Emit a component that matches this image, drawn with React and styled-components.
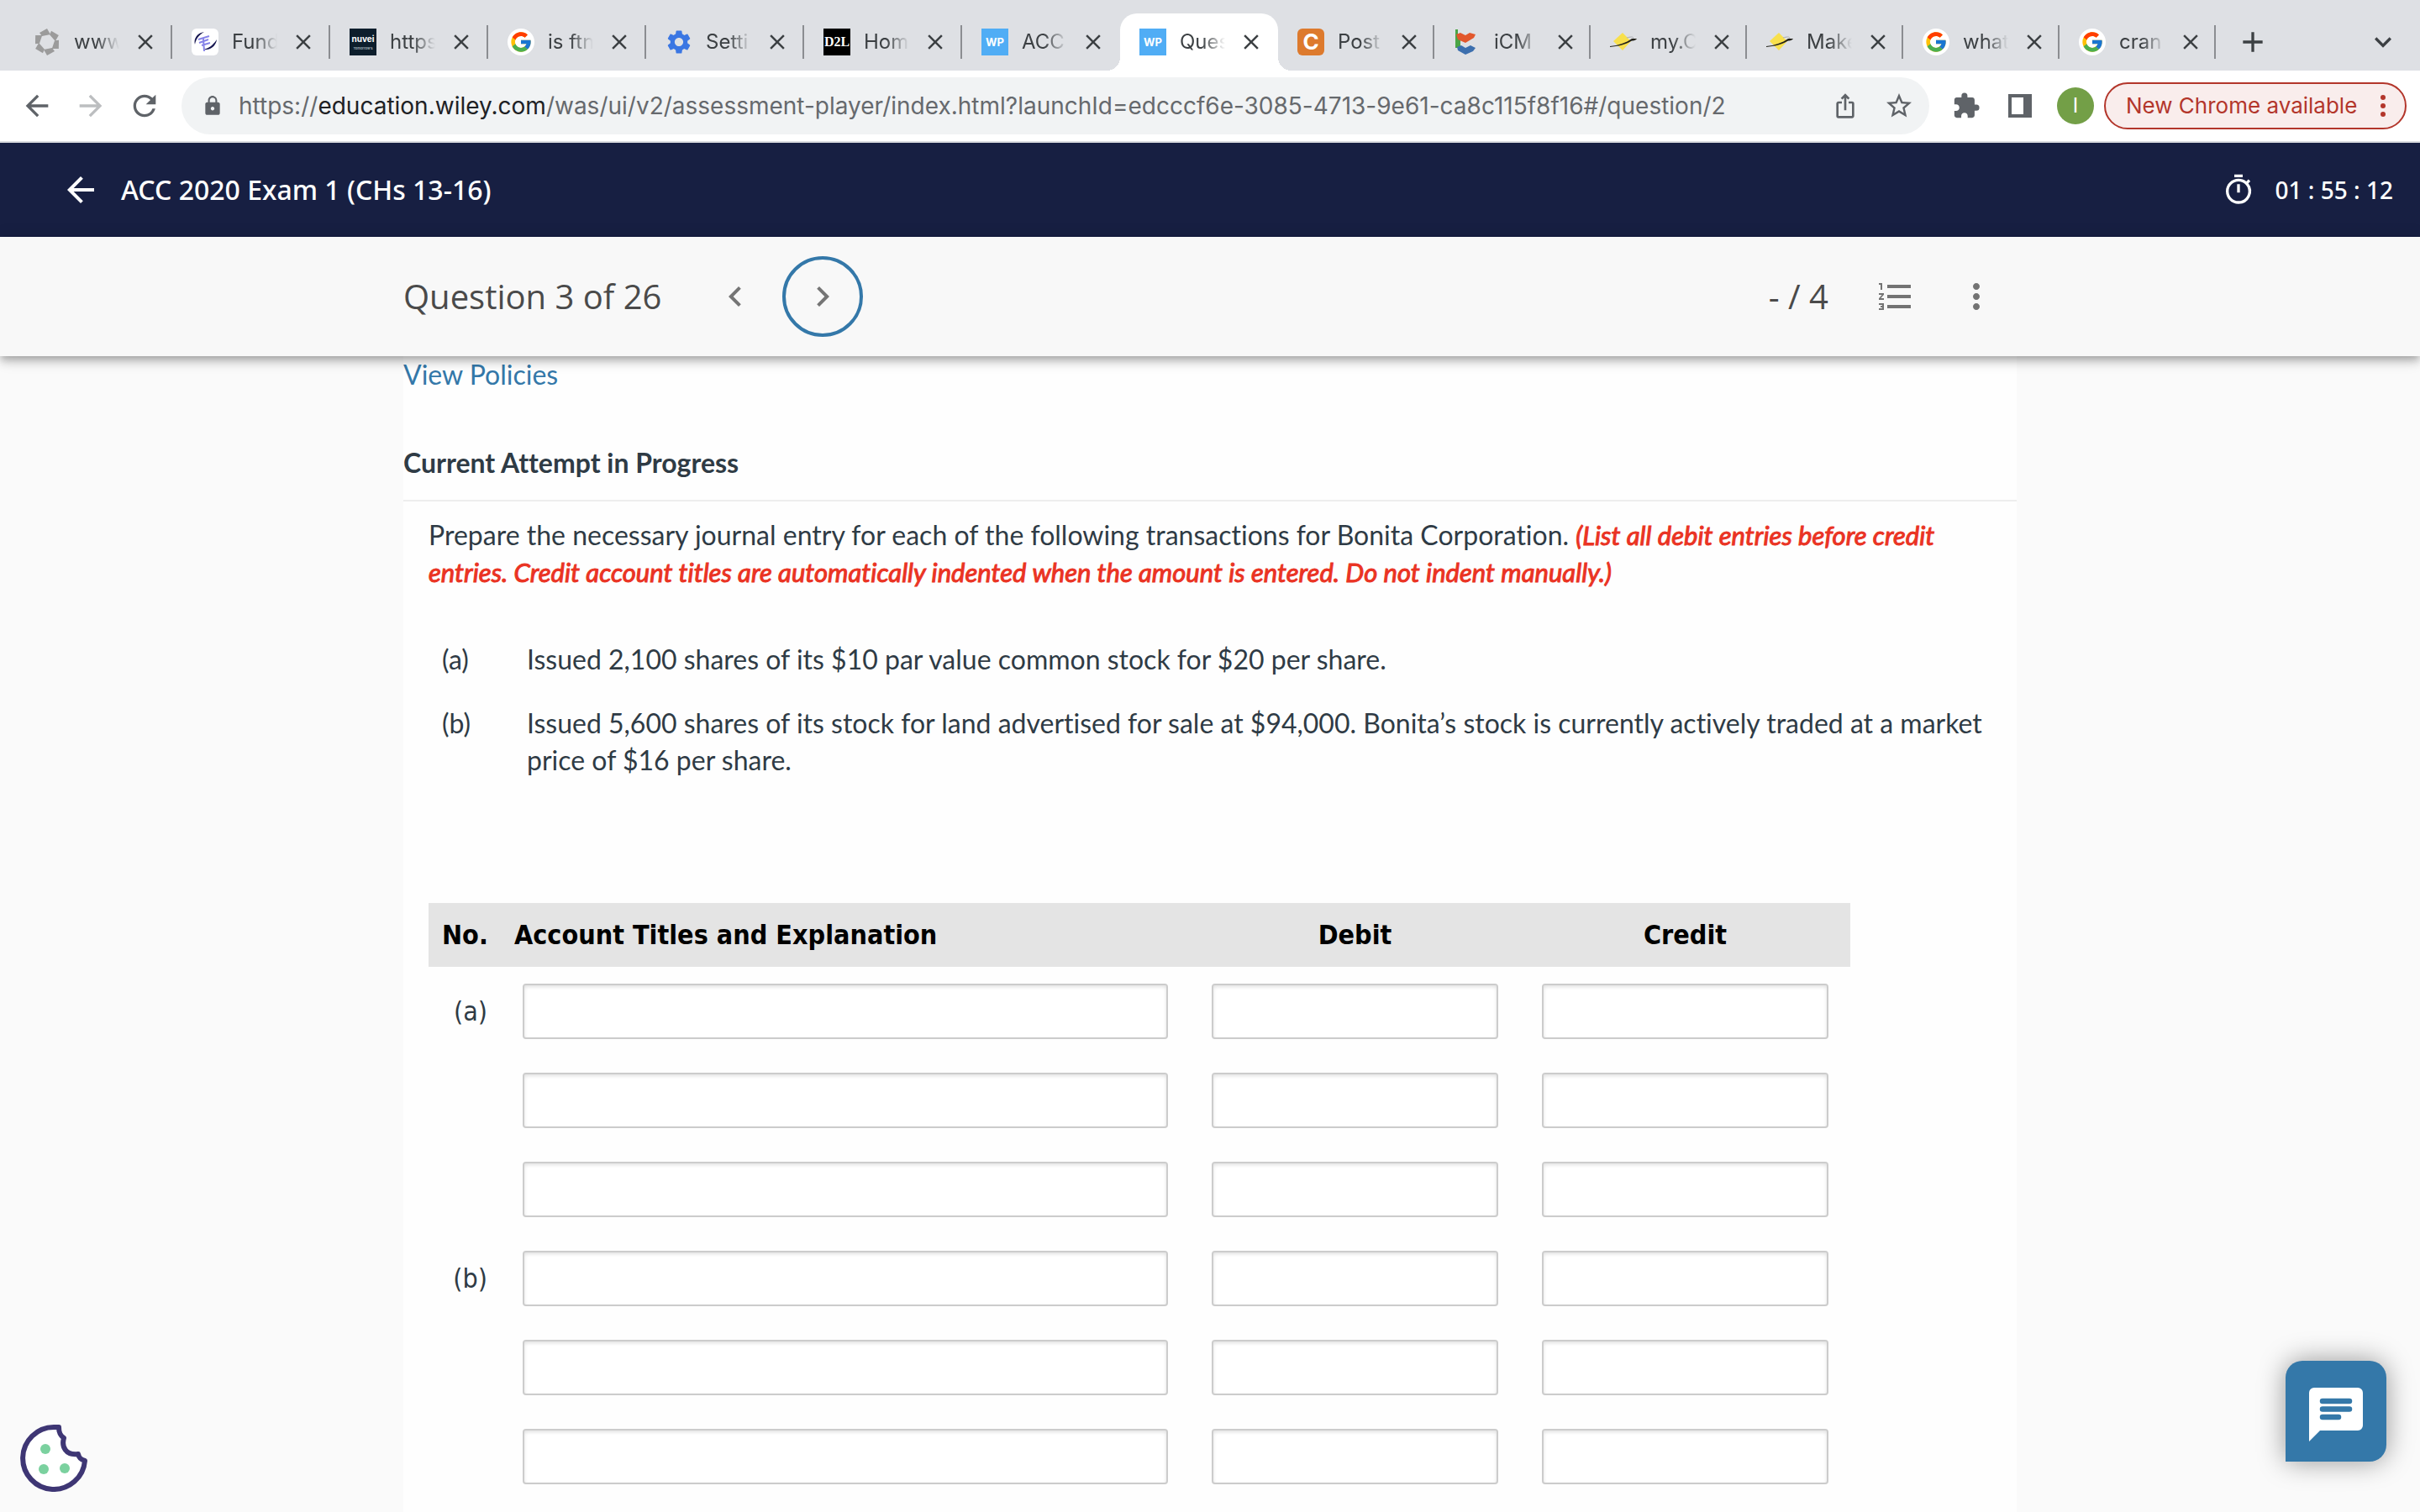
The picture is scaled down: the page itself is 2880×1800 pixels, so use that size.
import React from "react";
import styled, { createGlobalStyle } from "styled-components";
import {
  MdAdd,
  MdArrowBack,
  MdArrowForward,
  MdChevronLeft,
  MdChevronRight,
  MdClose,
  MdExtension,
  MdFormatListNumbered,
  MdIosShare,
  MdKeyboardArrowDown,
  MdLock,
  MdMoreVert,
  MdOutlineTimer,
  MdRefresh,
  MdSettings,
  MdStarBorder,
} from "react-icons/md";
import { FcGoogle } from "react-icons/fc";

const GlobalStyle = createGlobalStyle`
  * {
    box-sizing: border-box;
  }
  body {
    margin: 0;
    background-color: #fafafa;
    color: #2f3b45;
    font-family: Lato, "Noto Sans", sans-serif;
    font-size: 32px;
    line-height: 44px;
    font-variant-ligatures: none;
  }
  button {
    font: inherit;
    color: inherit;
    border: none;
    padding: 0;
    background: none;
    cursor: pointer;
  }
  svg {
    flex: none;
  }
`;

const Page = styled.div`
  display: flex;
  flex-direction: column;
  min-height: 100vh;
`;

/* ---------- browser window ---------- */

const Browser = styled.header`
  font-family: Inter, Roboto, sans-serif;
  color: #3c4043;
`;

const TabStrip = styled.div`
  display: flex;
  align-items: center;
  padding: 16px 16px 0 17px;
  background-color: #dee0e4;
`;

const Tabs = styled.div`
  display: grid;
  grid-template-columns: repeat(8, 188px) repeat(6, 186px);
`;

const Tab = styled.div`
  position: relative;
  display: flex;
  align-items: center;
  height: 68px;
  padding-left: 23px;
  border-radius: 20px 20px 0 0;
  background-color: ${(props) => (props.$active ? "#ffffff" : "transparent")};

  /* feet of the active tab */
  &::before,
  &::after {
    content: "";
    display: ${(props) => (props.$active ? "block" : "none")};
    position: absolute;
    bottom: 0;
    width: 16px;
    height: 16px;
  }
  &::before {
    left: -16px;
    background: radial-gradient(circle at 0 0, transparent 16px, #ffffff 16px);
  }
  &::after {
    right: -16px;
    background: radial-gradient(circle at 100% 0, transparent 16px, #ffffff 16px);
  }
`;

const TabTitle = styled.span`
  flex: 0 0 54px;
  margin: 0 21px 0 16px;
  overflow: hidden;
  white-space: nowrap;
  font-size: 24px;
  line-height: 32px;
  mask-image: linear-gradient(to right, #000 50%, transparent 100%);
`;

const IconButton = styled.button`
  display: flex;
  flex: none;
  align-items: center;
  justify-content: center;
  width: ${(props) => props.$size || 40}px;
  height: ${(props) => props.$size || 40}px;
  color: ${(props) => props.$color || "inherit"};
`;

const TabLine = styled.span`
  width: 2px;
  height: 40px;
  margin-left: auto;
  background-color: ${(props) => (props.$hidden ? "transparent" : "#8b8d91")};
`;

const StripActions = styled.div`
  display: flex;
  flex: 1;
  align-items: center;
  justify-content: space-between;
  padding: 0 8px 0 24px;
`;

const Favicon = styled.span`
  display: flex;
  flex: none;
  flex-direction: column;
  align-items: center;
  justify-content: center;
  width: 32px;
  height: 32px;
  border-radius: ${(props) => props.$radius || 0};
  background-color: ${(props) => props.$bg || "transparent"};
  color: ${(props) => props.$color || "#ffffff"};
  font: 700 ${(props) => props.$size || 13}px / 1 ${(props) => props.$font || "Inter, sans-serif"};
  overflow: hidden;
`;

const TinyText = styled.span`
  margin-top: 4px;
  color: #9aa5ad;
  font-size: 4px;
  line-height: 5px;
`;

const Toolbar = styled.div`
  display: flex;
  align-items: center;
  gap: 24px;
  height: 86px;
  padding: 0 16px 0 24px;
  background-color: #ffffff;
  border-bottom: 2px solid #dadce0;
  color: #5f6368;
`;

const Omnibox = styled.div`
  display: flex;
  flex: 1;
  align-items: center;
  gap: 24px;
  height: 68px;
  padding: 0 16px 0 24px;
  border-radius: 34px;
  background-color: #f1f3f4;
`;

const Address = styled.div`
  display: flex;
  flex: 1;
  align-items: center;
  gap: 18px;
  min-width: 0;
`;

const Url = styled.div`
  flex: 1;
  overflow: hidden;
  white-space: nowrap;
  font-size: 28px;
  line-height: 40px;
  outline: none;
  color: #66696d;

  b {
    font-weight: 400;
    color: #202124;
  }
`;

const Profile = styled.div`
  display: flex;
  align-items: center;
  gap: 12px;
`;

const Avatar = styled.button`
  width: 44px;
  height: 44px;
  border-radius: 50%;
  background-color: #739f47;
  color: #ffffff;
  font-size: 24px;
  line-height: 44px;
`;

const UpdateButton = styled.button`
  display: flex;
  align-items: center;
  justify-content: space-between;
  width: 360px;
  height: 56px;
  padding: 0 10px 0 24px;
  border: 2px solid #b3362b;
  border-radius: 28px;
  background-color: #f9edec;
  color: #b3362b;
  font-size: 26px;
  line-height: 32px;
`;

/* ---------- assessment player ---------- */

const ExamHeader = styled.header`
  display: flex;
  align-items: center;
  gap: 24px;
  height: 112px;
  padding: 0 32px 0 72px;
  background-color: #171f42;
  color: #ffffff;
  font-family: "Noto Sans", "Open Sans", sans-serif;
  font-weight: 500;
`;

const ExamTitle = styled.h1`
  margin: 0;
  font-size: 32px;
  font-weight: 500;
`;

const Timer = styled.div`
  display: flex;
  align-items: center;
  gap: 24px;
  margin-left: auto;
  font-size: 28px;
`;

const QuestionBar = styled.nav`
  position: relative;
  height: 142px;
  background-color: #f8f8f8;
  box-shadow: 0 4px 8px -2px rgba(0, 0, 0, 0.2), 0 8px 10px rgba(0, 0, 0, 0.14),
    0 2px 20px rgba(0, 0, 0, 0.12);
  color: #4a4a4a;
  font-family: "Open Sans", "Noto Sans", sans-serif;
`;

const BarInner = styled.div`
  display: flex;
  align-items: center;
  max-width: 1920px;
  height: 100%;
  margin: 0 auto;
  padding-right: 24px;
`;

const QuestionTitle = styled.h2`
  margin: 0;
  font-size: 40px;
  font-weight: 400;
`;

const StepButton = styled.button`
  display: flex;
  align-items: center;
  justify-content: center;
  width: 96px;
  height: 96px;
  margin-left: ${(props) => (props.$current ? "8px" : "40px")};
  border: 4px solid ${(props) => (props.$current ? "#3478a9" : "transparent")};
  border-radius: 50%;
  color: #757575;
`;

const BarTools = styled.div`
  display: flex;
  align-items: center;
  gap: 48px;
  margin-left: auto;
  color: #737373;
`;

const Score = styled.span`
  margin-right: 8px;
  color: #4a4a4a;
  font-size: 40px;
`;

const Sheet = styled.main`
  flex: 1;
  width: 100%;
  max-width: 1920px;
  margin: 0 auto;
  background-color: #fefefe;
`;

const PolicyLink = styled.a`
  color: #3478a9;
  text-decoration: none;
`;

const AttemptTitle = styled.h3`
  margin: 61px 0 0;
  padding-bottom: 22px;
  border-bottom: 2px solid #eeeeee;
  font-size: 32px;
  font-weight: 700;
`;

const Question = styled.section`
  padding: 18px 30px 0;
`;

const Intro = styled.p`
  margin: 0;
`;

// italic face thickened by a thin outline
const Instruction = styled.em`
  color: #ea3323;
  font-size: 31px;
  font-weight: 400;
  -webkit-text-stroke: 1px #ea3323;
`;

const Facts = styled.dl`
  display: grid;
  grid-template-columns: 101px 1fr;
  row-gap: 32px;
  margin: 60px 0 148px;
  padding-left: 16px;
`;

const Term = styled.dt`
  margin: 0;
`;

const Detail = styled.dd`
  margin: 0;
`;

const JournalTable = styled.table`
  width: 1692px;
  border-collapse: collapse;
  table-layout: fixed;
  font-family: "DejaVu Sans Condensed", "Noto Sans", sans-serif;
`;

const HeadCell = styled.th`
  width: ${(props) => props.$width}px;
  height: 76px;
  padding: 0 16px;
  background-color: #e4e4e4;
  color: #000000;
  text-align: ${(props) => props.$align || "center"};
  white-space: nowrap;
`;

const NoCell = styled.td`
  padding: 0 16px 0 0;
  text-align: right;
`;

const Cell = styled.td`
  height: 106px;
  padding: 0 26px;
`;

const Field = styled.input`
  display: block;
  width: 100%;
  height: 66px;
  padding: 8px 12px;
  border: 2px solid #cccccc;
  border-radius: 4px;
  background-color: #ffffff;
  box-shadow: inset 0 2px 4px rgba(0, 0, 0, 0.12);
  font: inherit;
  color: inherit;
  outline: none;
`;

const CookieButton = styled.button`
  position: fixed;
  left: 24px;
  bottom: 24px;
  width: 80px;
  height: 80px;
`;

const ChatButton = styled.button`
  position: fixed;
  right: 40px;
  bottom: 60px;
  display: flex;
  align-items: center;
  justify-content: center;
  width: 120px;
  height: 120px;
  padding-top: 8px;
  border-radius: 20px 20px 20px 0;
  background-color: #3478a9;
  box-shadow: 0 0 32px rgba(0, 0, 0, 0.4);
`;

function ShutterIcon() {
  return (
    <svg width="32" height="32" viewBox="0 0 32 32" fill="#9b9b9b">
      {[0, 60, 120, 180, 240, 300].map((angle) => (
        <path key={angle} d="M7 5 L16 0 L20 7 L10 9 Z" transform={`rotate(${angle} 16 16)`} />
      ))}
    </svg>
  );
}

function SwirlIcon() {
  return (
    <svg width="32" height="32" viewBox="0 0 32 32" fill="none">
      <path d="M15 4 C7 5 2 12 4 19 C5 13 8 8 15 4 Z" fill="#15154f" />
      <path d="M30 13 C29 21 22 26 14 25 C22 23 26 19 30 13 Z" fill="#15154f" />
      <path d="M8 13 L21 9 M9 17 L20 13 M12 20 L22 17 M14 12 L15 27" stroke="#8784e8" strokeWidth="2" />
    </svg>
  );
}

function HeartsIcon() {
  return (
    <svg width="32" height="32" viewBox="0 0 32 32">
      <path d="M2 1h3v6l3 3v11l-2 2H2z" fill="#4aa546" />
      <path d="M3 7l5-2 6 3 5-3 7 2-2 4-10 6-9-4z" fill="#e2572c" />
      <path d="M4 22l5-2 5 3 6-3 6 3-3 4-9 4-9-5z" fill="#3c6fae" />
    </svg>
  );
}

function OrbitIcon() {
  return (
    <svg width="32" height="32" viewBox="0 0 32 32">
      <path d="M15 5L25 15 15 26 4 15z" fill="#f8e04c" />
      <path d="M20 11 C27 9 30 10 26 14" stroke="#a9abb0" strokeWidth="1" fill="none" />
      <path d="M0 21 C10 20 19 17 26 12 L32 12 C30 15 27 14 25 15 C18 19 10 21 0 22z" fill="#23221a" />
    </svg>
  );
}

function GoogleIcon() {
  return (
    <Favicon $bg="#ffffff" $radius="50%">
      <FcGoogle size={28} />
    </Favicon>
  );
}

function WpIcon() {
  return <Favicon $bg="#50adf5">WP</Favicon>;
}

const tabs = [
  { title: "www.", icon: <ShutterIcon /> },
  {
    title: "Fund",
    icon: (
      <Favicon $bg="#ffffff" $radius="6px">
        <SwirlIcon />
      </Favicon>
    ),
  },
  {
    title: "https",
    icon: (
      <Favicon $bg="#0d1e2c" $size={10}>
        nuvei
        <TinyText>Tomorrow’s</TinyText>
      </Favicon>
    ),
  },
  { title: "is ftn", icon: <GoogleIcon /> },
  {
    title: "Setti",
    icon: (
      <Favicon $color="#3a76e3">
        <MdSettings size={34} />
      </Favicon>
    ),
  },
  {
    title: "Hom",
    icon: (
      <Favicon $bg="#000000" $size={16} $font='"Liberation Serif", serif'>
        D2L
      </Favicon>
    ),
  },
  { title: "ACC", icon: <WpIcon />, noLine: true },
  { title: "Ques", icon: <WpIcon />, active: true, noLine: true },
  {
    title: "Post",
    icon: (
      <Favicon $bg="#dd7a2d" $radius="6px" $size={26}>
        C
      </Favicon>
    ),
  },
  { title: "iCM", icon: <HeartsIcon /> },
  { title: "my.C", icon: <OrbitIcon /> },
  { title: "Make", icon: <OrbitIcon /> },
  { title: "what", icon: <GoogleIcon /> },
  { title: "cran", icon: <GoogleIcon /> },
];

const rows = ["(a)", "", "", "(b)", "", ""];

function SidePanelIcon() {
  return (
    <svg width="28" height="28" viewBox="0 0 28 28" fill="currentColor">
      <path d="M0 0h28v28H0z M4 4v20h14V4z" fillRule="evenodd" />
    </svg>
  );
}

function UpdateDots() {
  return (
    <svg width="32" height="32" viewBox="0 0 32 32" fill="currentColor">
      <circle cx="16" cy="6" r="3" />
      <circle cx="16" cy="16" r="3" />
      <circle cx="16" cy="26" r="3" />
    </svg>
  );
}

function CookieIcon() {
  return (
    <svg width="80" height="80" viewBox="0 0 80 80">
      <path
        d="M46 3 C46 10 48 13 52 16 C49 26 54 37 69 35 C70 40 73 42 77 43 A37 37 0 1 1 40 3 Z"
        fill="#ffffff"
        stroke="#3e3674"
        strokeWidth="6"
        strokeLinejoin="round"
      />
      <circle cx="30" cy="29" r="6" fill="#7bd19f" />
      <circle cx="28" cy="53" r="6" fill="#7bd19f" />
      <circle cx="53" cy="52" r="6" fill="#7bd19f" />
    </svg>
  );
}

function ChatIcon() {
  return (
    <svg width="64" height="64" viewBox="0 0 64 64">
      <path d="M6 0h52a6 6 0 0 1 6 6v39a6 6 0 0 1-6 6H13L0 64V6a6 6 0 0 1 6-6z" fill="#ffffff" />
      <path d="M16 16h32M16 25.500h32M16 35h19" stroke="#3478a9" strokeWidth="6.500" strokeLinecap="round" />
    </svg>
  );
}

function BrowserChrome() {
  return (
    <Browser>
      <TabStrip>
        <Tabs>
          {tabs.map((tab, i) => (
            <Tab key={i} $active={tab.active}>
              {tab.icon}
              <TabTitle>{tab.title}</TabTitle>
              <IconButton $size={20} aria-label={`Close ${tab.title}`}>
                <MdClose size={30} />
              </IconButton>
              <TabLine $hidden={tab.noLine} />
            </Tab>
          ))}
        </Tabs>
        <StripActions>
          <IconButton aria-label="New tab">
            <MdAdd size={40} />
          </IconButton>
          <IconButton aria-label="Search tabs">
            <MdKeyboardArrowDown size={40} />
          </IconButton>
        </StripActions>
      </TabStrip>
      <Toolbar>
        <IconButton aria-label="Back">
          <MdArrowBack size={40} />
        </IconButton>
        <IconButton aria-label="Forward" $color="#bcbec0">
          <MdArrowForward size={40} />
        </IconButton>
        <IconButton aria-label="Reload">
          <MdRefresh size={40} />
        </IconButton>
        <Omnibox>
          <Address>
            <MdLock size={26} />
            <Url role="textbox" aria-label="Address" contentEditable suppressContentEditableWarning>
              https://<b>education.wiley.com</b>
              /was/ui/v2/assessment-player/index.html?launchId=edcccf6e-3085-4713-9e61-ca8c115f8f16#/question/2
            </Url>
          </Address>
          <IconButton aria-label="Share">
            <MdIosShare size={32} />
          </IconButton>
          <IconButton aria-label="Bookmark">
            <MdStarBorder size={36} />
          </IconButton>
        </Omnibox>
        <IconButton aria-label="Extensions">
          <MdExtension size={34} />
        </IconButton>
        <IconButton aria-label="Side panel">
          <SidePanelIcon />
        </IconButton>
        <Profile>
          <Avatar>I</Avatar>
          <UpdateButton>
            New Chrome available
            <UpdateDots />
          </UpdateButton>
        </Profile>
      </Toolbar>
    </Browser>
  );
}

function Journal() {
  return (
    <JournalTable>
      <thead>
        <tr>
          <HeadCell $width={86} $align="left">No.</HeadCell>
          <HeadCell $width={820} $align="left">Account Titles and Explanation</HeadCell>
          <HeadCell $width={393}>Debit</HeadCell>
          <HeadCell $width={393}>Credit</HeadCell>
        </tr>
      </thead>
      <tbody>
        {rows.map((no, i) => (
          <tr key={i}>
            <NoCell>{no}</NoCell>
            <Cell>
              <Field type="text" aria-label={`Account title ${i + 1}`} />
            </Cell>
            <Cell>
              <Field type="text" aria-label={`Debit ${i + 1}`} />
            </Cell>
            <Cell>
              <Field type="text" aria-label={`Credit ${i + 1}`} />
            </Cell>
          </tr>
        ))}
      </tbody>
    </JournalTable>
  );
}

function App() {
  return (
    <Page>
      <GlobalStyle />
      <BrowserChrome />
      <ExamHeader>
        <IconButton $size={48} aria-label="Back to course">
          <MdArrowBack size={48} />
        </IconButton>
        <ExamTitle>ACC 2020 Exam 1 (CHs 13-16)</ExamTitle>
        <Timer>
          <MdOutlineTimer size={40} />
          <span>01 : 55 : 12</span>
        </Timer>
      </ExamHeader>
      <QuestionBar>
        <BarInner>
          <QuestionTitle>Question 3 of 26</QuestionTitle>
          <StepButton aria-label="Previous question">
            <MdChevronLeft size={48} />
          </StepButton>
          <StepButton $current aria-label="Next question">
            <MdChevronRight size={48} />
          </StepButton>
          <BarTools>
            <Score>- / 4</Score>
            <IconButton $size={48} aria-label="Question list">
              <MdFormatListNumbered size={48} />
            </IconButton>
            <IconButton $size={48} aria-label="More options">
              <MdMoreVert size={48} />
            </IconButton>
          </BarTools>
        </BarInner>
      </QuestionBar>
      <Sheet>
        <PolicyLink href="#policies">View Policies</PolicyLink>
        <AttemptTitle>Current Attempt in Progress</AttemptTitle>
        <Question>
          <Intro>
            Prepare the necessary journal entry for each of the following transactions for Bonita
            Corporation.{" "}
            <Instruction>
              (List all debit entries before credit entries. Credit account titles are automatically
              indented when the amount is entered. Do not indent manually.)
            </Instruction>
          </Intro>
          <Facts>
            <Term>(a)</Term>
            <Detail>Issued 2,100 shares of its $10 par value common stock for $20 per share.</Detail>
            <Term>(b)</Term>
            <Detail>
              Issued 5,600 shares of its stock for land advertised for sale at $94,000. Bonita’s
              stock is currently actively traded at a market price of $16 per share.
            </Detail>
          </Facts>
          <Journal />
        </Question>
      </Sheet>
      <CookieButton aria-label="Cookie preferences">
        <CookieIcon />
      </CookieButton>
      <ChatButton aria-label="Open chat">
        <ChatIcon />
      </ChatButton>
    </Page>
  );
}

export default App;
